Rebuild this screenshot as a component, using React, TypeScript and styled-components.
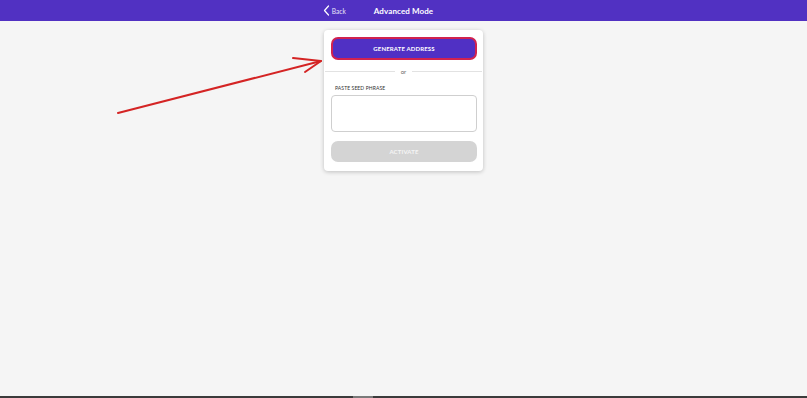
import React from "react";
import styled, { createGlobalStyle } from "styled-components";

const Global = createGlobalStyle`
  html, body { margin: 0; padding: 0; height: 100%; }
  body { background: #f5f5f5; font-family: Lato, "Open Sans", sans-serif; overflow: hidden; }
  #root { height: 100%; }
`;

const Page = styled.div`
  position: relative;
  height: 100vh;
  display: flex;
  flex-direction: column;
`;

const Header = styled.header`
  height: 21px;
  flex: none;
  background: #5131c2;
  color: #fff;
  display: grid;
  grid-template-columns: 1fr auto 1fr;
  align-items: center;
`;

const BackLink = styled.div`
  justify-self: end;
  margin-right: 28px;
  display: flex;
  align-items: center;
  gap: 2px;
  font-size: 6.6px;
  color: #e8e4f8;
`;

const Title = styled.div`
  font-size: 8px;
  font-weight: 700;
  letter-spacing: 0.1px;
`;

const Main = styled.main`
  flex: 1;
  display: flex;
  justify-content: center;
  align-items: flex-start;
  padding-top: 9px;
`;

const Card = styled.section`
  width: 159px;
  box-sizing: border-box;
  background: #fff;
  border-radius: 4px;
  box-shadow: 0 1px 4px rgba(0, 0, 0, 0.22);
  padding: 7px 0 9px;
  display: flex;
  flex-direction: column;
`;

const Inner = styled.div`
  padding: 0 6px 0 7px;
  display: flex;
  flex-direction: column;
`;

const Button = styled.button<{ $disabled?: boolean }>`
  height: ${(p) => (p.$disabled ? 21 : 23)}px;
  width: 100%;
  box-sizing: border-box;
  border-radius: 7px;
  border: ${(p) => (p.$disabled ? "none" : "2px solid #d1224f")};
  background: ${(p) => (p.$disabled ? "#d4d4d4" : "#5030c4")};
  color: ${(p) => (p.$disabled ? "#f4f4f4" : "#fff")};
  font-family: Lato, sans-serif;
  font-size: 6px;
  font-weight: 700;
  letter-spacing: 0.15px;
  padding: 0;
  cursor: pointer;
`;

const Divider = styled.div`
  display: flex;
  align-items: center;
  gap: 6px;
  margin: 8px 1px 10px;
  font-size: 6px;
  color: #666;
  &::before, &::after {
    content: "";
    flex: 1;
    height: 1px;
    background: #e2e2e2;
  }
`;

const Label = styled.div`
  font-size: 5px;
  color: #333;
  padding-left: 4px;
  margin-bottom: 4px;
  letter-spacing: 0.1px;
`;

const TextArea = styled.textarea`
  height: 37px;
  box-sizing: border-box;
  border: 1px solid #cfcfcf;
  border-radius: 4px;
  resize: none;
  margin: 0 0 9px;
  outline: none;
`;

const BottomBar = styled.div`
  height: 2px;
  flex: none;
  background: #3b3b3b;
  display: flex;
  padding-left: 353px;
`;

const BarThumb = styled.div`
  width: 20px;
  background: #7a7a7a;
`;

const ArrowSvg = styled.svg`
  position: absolute;
  left: 0;
  top: 0;
  pointer-events: none;
`;

export default function App() {
  return (
    <>
      <Global />
      <Page>
        <Header>
          <BackLink>
            <svg width="7" height="11" viewBox="0 0 7 11">
              <path d="M5.5 1 L1.5 5.5 L5.5 10" fill="none" stroke="#fff" strokeWidth="1.2" strokeLinecap="round" strokeLinejoin="round" />
            </svg>
            <span>Back</span>
          </BackLink>
          <Title>Advanced Mode</Title>
          <div />
        </Header>
        <Main>
          <Card>
            <Inner>
              <Button>GENERATE ADDRESS</Button>
            </Inner>
            <Divider>or</Divider>
            <Inner>
              <Label>PASTE SEED PHRASE</Label>
              <TextArea />
              <Button $disabled>ACTIVATE</Button>
            </Inner>
          </Card>
        </Main>
        <BottomBar>
          <BarThumb />
        </BottomBar>
        <ArrowSvg width="807" height="398" viewBox="0 0 807 398">
          <g fill="none" stroke="#d42424" strokeWidth="2" strokeLinecap="round">
            <path d="M118 113 L321 61" />
            <path d="M293 58 L321 61 L305 72" strokeLinejoin="round" />
          </g>
        </ArrowSvg>
      </Page>
    </>
  );
}
